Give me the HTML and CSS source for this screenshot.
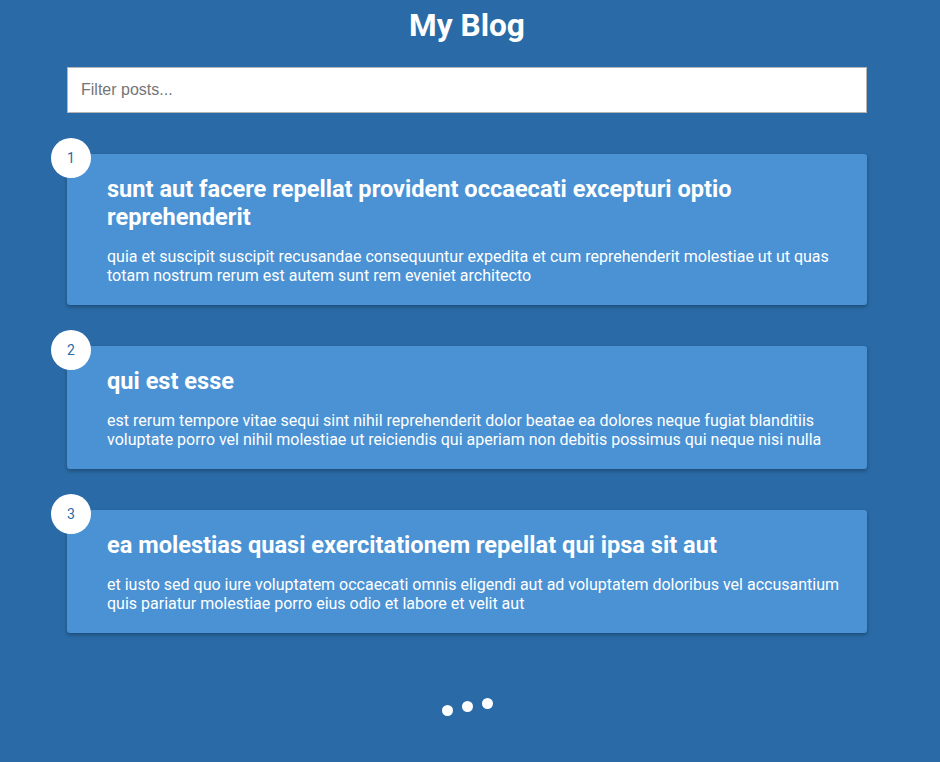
FILE: index.html
```html
<!DOCTYPE html>
<html>
<head>
<meta charset="utf-8">
<link rel="stylesheet" href="styles.css">
</head>
<body>
<div class="page">
  <h1 class="title">My Blog</h1>
  <input class="filter" type="text" placeholder="Filter posts...">
  <div class="posts">
    <div class="post">
      <div class="num">1</div>
      <h2 class="post-title">sunt aut facere repellat provident occaecati excepturi optio reprehenderit</h2>
      <p class="post-body">quia et suscipit suscipit recusandae consequuntur expedita et cum reprehenderit molestiae ut ut quas totam nostrum rerum est autem sunt rem eveniet architecto</p>
    </div>
    <div class="post">
      <div class="num">2</div>
      <h2 class="post-title">qui est esse</h2>
      <p class="post-body">est rerum tempore vitae sequi sint nihil reprehenderit dolor beatae ea dolores neque fugiat blanditiis voluptate porro vel nihil molestiae ut reiciendis qui aperiam non debitis possimus qui neque nisi nulla</p>
    </div>
    <div class="post">
      <div class="num">3</div>
      <h2 class="post-title">ea molestias quasi exercitationem repellat qui ipsa sit aut</h2>
      <p class="post-body">et iusto sed quo iure voluptatem occaecati omnis eligendi aut ad voluptatem doloribus vel accusantium quis pariatur molestiae porro eius odio et labore et velit aut</p>
    </div>
  </div>
  <div class="loader">
    <span class="dot d1"></span>
    <span class="dot d2"></span>
    <span class="dot d3"></span>
  </div>
</div>
</body>
</html>
```
FILE: styles.css
```css
html, body {
  margin: 0;
  padding: 0;
  background: #2a6ba7;
  height: 100%;
}
body {
  font-family: Roboto, "Liberation Sans", sans-serif;
  color: #fff;
}
.page {
  width: 800px;
  margin-left: 67px;
  display: flex;
  flex-direction: column;
}
.title {
  margin: 7px 0 0;
  font-size: 31.6px;
  font-weight: 700;
  text-align: center;
  line-height: 38px;
}
.filter {
  margin-top: 22px;
  box-sizing: border-box;
  width: 800px;
  height: 46px;
  border: 1px solid #b5b5b5;
  padding: 0 13px;
  font-family: "Liberation Sans", Arial, sans-serif;
  font-size: 16px;
  color: #333;
  background: #fff;
  outline: none;
}
.filter::placeholder {
  color: #757575;
}
.posts {
  margin-top: 41px;
  display: flex;
  flex-direction: column;
  gap: 41px;
}
.post {
  position: relative;
  background: #4a92d4;
  border-radius: 3px;
  box-shadow: 0 2px 4px rgba(0, 0, 0, 0.3);
  padding: 21px 20px 20px 40px;
}
.num {
  position: absolute;
  left: -16px;
  top: -16px;
  width: 40px;
  height: 40px;
  border-radius: 50%;
  background: #fff;
  color: #2a6ba7;
  font-size: 14px;
  display: flex;
  align-items: center;
  justify-content: center;
}
.post-title {
  margin: 0 0 16px;
  font-size: 23.6px;
  font-weight: 700;
  line-height: 28px;
}
.post-body {
  margin: 0;
  font-size: 16px;
  line-height: 19px;
}
.loader {
  display: flex;
  justify-content: center;
  align-items: flex-start;
  gap: 9px;
  margin-top: 65px;
}
.dot {
  width: 11px;
  height: 11px;
  border-radius: 50%;
  background: #fff;
}
.d1 { margin-top: 7px; }
.d2 { margin-top: 3px; }
.d3 { margin-top: 0; }
```
